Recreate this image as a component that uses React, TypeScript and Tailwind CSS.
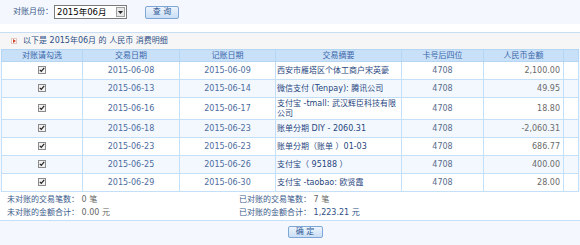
import React from "react";

type Row = {
  tradeDate: string;
  postDate: string;
  summary: string;
  card: string;
  amount: string;
};

const rows: Row[] = [
  { tradeDate: "2015-06-08", postDate: "2015-06-09", summary: "西安市雁塔区个体工商户宋英豪", card: "4708", amount: "2,100.00" },
  { tradeDate: "2015-06-13", postDate: "2015-06-14", summary: "微信支付 (Tenpay): 腾讯公司", card: "4708", amount: "49.95" },
  { tradeDate: "2015-06-16", postDate: "2015-06-17", summary: "支付宝 -tmall: 武汉辉臣科技有限公司", card: "4708", amount: "18.80" },
  { tradeDate: "2015-06-18", postDate: "2015-06-23", summary: "账单分期 DIY - 2060.31", card: "4708", amount: "-2,060.31" },
  { tradeDate: "2015-06-23", postDate: "2015-06-23", summary: "账单分期（账单 ）01-03", card: "4708", amount: "686.77" },
  { tradeDate: "2015-06-25", postDate: "2015-06-26", summary: "支付宝（ 95188 ）", card: "4708", amount: "400.00" },
  { tradeDate: "2015-06-29", postDate: "2015-06-30", summary: "支付宝 -taobao: 欧贤霞", card: "4708", amount: "28.00" },
];

const headers = ["对账请勾选", "交易日期", "记账日期", "交易摘要", "卡号后四位", "人民币金额", ""];

const CheckBox = () => (
  <span className="inline-flex h-[8px] w-[8px] items-center justify-center border border-[#8a8a8a] bg-[#f2f2f2] align-middle">
    <svg width="6" height="6" viewBox="0 0 6 6">
      <path d="M0.8 2.8 L2.3 4.4 L5.2 0.9" stroke="#222" strokeWidth="1.2" fill="none" />
    </svg>
  </span>
);

const App = () => {
  return (
    <div
      className="h-[245px] w-[580px] bg-[#f4f8fe] text-[8px] leading-[10px] text-[#3b5a8a]"
      style={{ fontFamily: '"DejaVu Sans", "Noto Sans CJK SC", sans-serif' }}
    >
      <div className="flex h-[24px] items-center pl-[13px]">
        <span className="text-[#3b5a8a]">对账月份：</span>
        <div className="ml-[1px] flex h-[14px] w-[73px] items-center border border-[#7a7a7a] bg-white">
          <span className="flex-1 pl-[2px] text-[8.5px] text-black">2015年06月</span>
          <span className="mr-[1px] flex h-[10px] w-[9px] items-center justify-center border border-[#a0a0a0] bg-[#e8e8e8]">
            <svg width="5" height="3" viewBox="0 0 5 3">
              <path d="M0 0 L5 0 L2.5 3 Z" fill="#222" />
            </svg>
          </span>
        </div>
        <button className="ml-[18px] flex h-[13px] w-[34px] items-center justify-center rounded-[2px] border border-[#7ea6d6] bg-gradient-to-b from-[#eef5fd] to-[#c9def5] text-[#2f5a95]">
          查 询
        </button>
      </div>
      <div className="h-[8px] bg-white" />
      <div className="flex h-[17px] items-center border-t border-[#c7def4] bg-[#f6f6f6] pl-[11px] text-[#2d4f86]">
        <span className="mr-[6px] flex h-[6px] w-[6px] items-center justify-center border border-[#e3c7c0] bg-white">
          <svg width="3" height="4" viewBox="0 0 3 4">
            <path d="M0 0 L3 2 L0 4 Z" fill="#d2452b" />
          </svg>
        </span>
        <span>以下是 2015年06月 的 人民币 消费明细</span>
      </div>
      <table className="ml-[1px] w-[577px] table-fixed border-collapse bg-white">
        <colgroup>
          <col className="w-[81px]" />
          <col className="w-[97px]" />
          <col className="w-[96px]" />
          <col className="w-[126px]" />
          <col className="w-[82px]" />
          <col className="w-[80px]" />
          <col className="w-[15px]" />
        </colgroup>
        <thead>
          <tr className="h-[12px] bg-[#c8e0f8] text-[#3a66a8]">
            {headers.map((h, i) => (
              <th key={i} className="border border-[#b5d6f3] p-0 text-center font-normal">
                {h}
              </th>
            ))}
          </tr>
        </thead>
        <tbody>
          {rows.map((r, i) => (
            <tr key={i} className={`${i === 2 ? "h-[22px]" : "h-[18px]"} ${i % 2 === 1 ? "bg-[#f3f8fe]" : "bg-white"}`}>
              <td className="border border-[#c4e0f8] p-0 text-center">
                <CheckBox />
              </td>
              <td className="border border-[#c4e0f8] p-0 text-center text-[#4d6c9e]">{r.tradeDate}</td>
              <td className="border border-[#c4e0f8] p-0 text-center text-[#4d6c9e]">{r.postDate}</td>
              <td className="border border-[#c4e0f8] py-0 pr-0 pl-[1px] text-left leading-[10px] text-[#27467e]">{r.summary}</td>
              <td className="border border-[#c4e0f8] p-0 text-center text-[#5a6c8c]">{r.card}</td>
              <td className="border border-[#c4e0f8] py-0 pr-[3px] text-right text-[#6a6a6a]">{r.amount}</td>
              <td className="border border-[#c4e0f8] p-0" />
            </tr>
          ))}
        </tbody>
      </table>
      <div className="grid h-[29px] grid-cols-[232px_1fr] content-center gap-y-[3px] border-b border-[#c4e0f8] bg-white pl-[7px] text-[#3b5a8a]">
        <span>
          未对账的交易笔数： <span className="text-[#666]">0 笔</span>
        </span>
        <span>
          已对账的交易笔数： <span className="text-[#666]">7 笔</span>
        </span>
        <span>
          未对账的金额合计： <span className="text-[#666]">0.00 元</span>
        </span>
        <span>
          已对账的金额合计： <span className="text-[#2d4f86]">1,223.21 元</span>
        </span>
      </div>
      <div className="flex justify-center pt-[5px] pl-[30px]">
        <button className="flex h-[12px] w-[35px] items-center justify-center rounded-[2px] border border-[#7ea6d6] bg-gradient-to-b from-[#eef5fd] to-[#c9def5] text-[#2f5a95]">
          确 定
        </button>
      </div>
    </div>
  );
};

export default App;
